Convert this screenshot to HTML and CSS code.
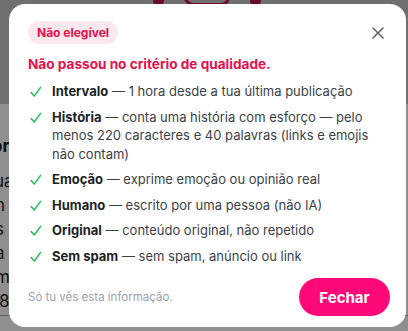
FILE: index.html
```html
<!DOCTYPE html>
<html lang="pt">
<head>
<meta charset="utf-8">
<link rel="stylesheet" href="styles.css">
</head>
<body>
<div class="page">
  <div class="topband">
    <div class="topart">
      <span class="dot"></span>
      <span class="arc"></span>
      <span class="dot"></span>
    </div>
  </div>
  <div class="behind">
    <p class="b1">or</p>
    <p class="b2">ua</p>
    <p>n</p>
    <p>s</p>
    <p>a</p>
    <p>m</p>
    <p class="b8">8</p>
  </div>
  <div class="divider"></div>
</div>
<div class="overlay"></div>
<div class="modal">
  <div class="head">
    <span class="badge">Não elegível</span>
    <button class="close" aria-label="Fechar">
      <svg width="12" height="12" viewBox="0 0 12 12"><path d="M1 1 L11 11 M11 1 L1 11" stroke="#5b6472" stroke-width="1.6" stroke-linecap="round"/></svg>
    </button>
  </div>
  <h2 class="title">Não passou no critério de qualidade.</h2>
  <ul class="list">
    <li><span class="chk"><svg width="12" height="12" viewBox="0 0 12 12"><path d="M1.2 6.6 L4.3 10 L10.6 1.4" fill="none" stroke="#2fbf5f" stroke-width="1.6" stroke-linecap="round" stroke-linejoin="round"/></svg></span><span class="txt"><b>Intervalo</b> — 1 hora desde a tua última publicação</span></li>
    <li><span class="chk"><svg width="12" height="12" viewBox="0 0 12 12"><path d="M1.2 6.6 L4.3 10 L10.6 1.4" fill="none" stroke="#2fbf5f" stroke-width="1.6" stroke-linecap="round" stroke-linejoin="round"/></svg></span><span class="txt"><b>História</b> — conta uma história com esforço — pelo menos 220 caracteres e 40 palavras (links e emojis não contam)</span></li>
    <li><span class="chk"><svg width="12" height="12" viewBox="0 0 12 12"><path d="M1.2 6.6 L4.3 10 L10.6 1.4" fill="none" stroke="#2fbf5f" stroke-width="1.6" stroke-linecap="round" stroke-linejoin="round"/></svg></span><span class="txt"><b>Emoção</b> — exprime emoção ou opinião real</span></li>
    <li><span class="chk"><svg width="12" height="12" viewBox="0 0 12 12"><path d="M1.2 6.6 L4.3 10 L10.6 1.4" fill="none" stroke="#2fbf5f" stroke-width="1.6" stroke-linecap="round" stroke-linejoin="round"/></svg></span><span class="txt"><b>Humano</b> — escrito por uma pessoa (não IA)</span></li>
    <li><span class="chk"><svg width="12" height="12" viewBox="0 0 12 12"><path d="M1.2 6.6 L4.3 10 L10.6 1.4" fill="none" stroke="#2fbf5f" stroke-width="1.6" stroke-linecap="round" stroke-linejoin="round"/></svg></span><span class="txt"><b>Original</b> — conteúdo original, não repetido</span></li>
    <li><span class="chk"><svg width="12" height="12" viewBox="0 0 12 12"><path d="M1.2 6.6 L4.3 10 L10.6 1.4" fill="none" stroke="#2fbf5f" stroke-width="1.6" stroke-linecap="round" stroke-linejoin="round"/></svg></span><span class="txt"><b>Sem spam</b> — sem spam, anúncio ou link</span></li>
  </ul>
  <div class="foot">
    <span class="note">Só tu vês esta informação.</span>
    <button class="btn">Fechar</button>
  </div>
</div>
</body>
</html>
```
FILE: styles.css
```css
* { box-sizing: border-box; }
html, body { margin: 0; padding: 0; }
body {
  width: 408px;
  height: 331px;
  overflow: hidden;
  font-family: Inter, "Noto Sans", sans-serif;
  background: #ffffff;
}
.page { height: 331px; overflow: hidden; }
.topband {
  height: 104px;
  background: #c6c6c6;
}
.topart {
  display: flex;
  align-items: flex-start;
  gap: 20px;
  padding-left: 153px;
}
.dot { width: 11px; height: 11px; border-radius: 50%; background: #c0124a; margin-top: -5px; }
.arc { width: 46px; height: 18px; border: 3px solid #c0124a; border-radius: 12px; margin-top: -12px; }
.behind { padding-top: 30px; }
.behind p {
  margin: 0;
  font-size: 17px;
  line-height: 24px;
  color: #1d1d1d;
  margin-left: -5px;
}
.behind .b1 { font-weight: 700; margin-left: -8px; }
.behind .b2 { margin-top: 11px; margin-left: -6px; }
.behind .b8 { margin-left: -1px; }
.divider { height: 1px; background: #aaa; margin-top: 2px; }
.overlay {
  position: fixed;
  inset: 0;
  background: rgba(0, 0, 0, 0.44);
}
.modal {
  position: fixed;
  left: 9px;
  top: 4px;
  width: 397px;
  height: 323px;
  background: #fff;
  border-radius: 16px;
  padding: 17px 16px 11px 19px;
  display: flex;
  flex-direction: column;
}
.head {
  display: flex;
  justify-content: space-between;
  align-items: center;
  height: 23px;
}
.badge {
  height: 23px;
  display: inline-flex;
  align-items: center;
  padding: 0 9px;
  border-radius: 12px;
  background: #fde8ed;
  color: #e3124e;
  font-size: 12px;
  font-weight: 700;
}
.close {
  width: 24px;
  height: 24px;
  border: 0;
  background: transparent;
  padding: 0;
  display: flex;
  align-items: center;
  justify-content: center;
}
.title {
  margin: 10px 0 0;
  font-size: 13.6px;
  line-height: 20px;
  font-weight: 700;
  color: #e3124e;
}
.list {
  list-style: none;
  margin: 8px 0 0;
  padding: 0;
  display: flex;
  flex-direction: column;
  gap: 7px;
}
.list li {
  display: flex;
  font-size: 13px;
  line-height: 18.5px;
  color: #3a3f47;
}
.chk {
  width: 24px;
  flex: none;
  padding-left: 2px;
  padding-top: 4px;
}
.chk svg { display: block; }
.txt { flex: 1; }
.txt b { color: #1c1f24; font-weight: 700; }
.foot {
  margin-top: auto;
  display: flex;
  justify-content: space-between;
  align-items: center;
}
.note {
  font-size: 11.5px;
  color: #9aa1ab;
}
.btn {
  width: 91px;
  height: 38px;
  border: 0;
  border-radius: 19px;
  background: #fe0a78;
  color: #fff;
  font-family: Inter, "Noto Sans", sans-serif;
  font-size: 15px;
  font-weight: 700;
  padding: 0;
}
```
